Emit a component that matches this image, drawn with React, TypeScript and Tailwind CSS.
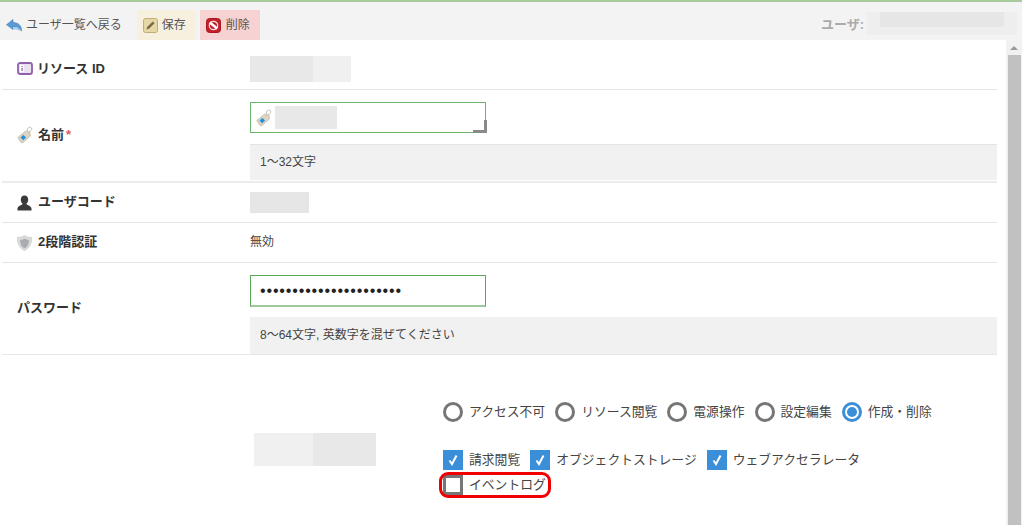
import React from 'react';

function BackIcon() {
  return (
    <svg width="16" height="13" viewBox="0 0 16 13" className="shrink-0">
      <path d="M7 0.5 L0.5 5.8 L7 10.5 V8 H11 L15.5 12 C15.8 7 12.5 3.5 7 3.5 Z" fill="#5b9bd5" stroke="#3f7fb8" strokeWidth="0.6" />
      <path d="M7 8 H11 L15.5 12 L10 10.6 H7 Z" fill="#a9cdea" />
    </svg>
  );
}

function SaveIcon() {
  return (
    <svg width="15" height="15" viewBox="0 0 15 15" className="shrink-0">
      <rect x="0.5" y="0.5" width="14" height="14" rx="2" fill="#e6d7a6" stroke="#bfae78" />
      <path d="M3.5 11.5 L4.2 9 L9.8 3.6 L11.5 5.3 L6 10.8 Z" fill="#7a6a44" />
    </svg>
  );
}

function DeleteIcon() {
  return (
    <svg width="15" height="15" viewBox="0 0 15 15" className="shrink-0">
      <rect x="0.5" y="0.5" width="14" height="14" rx="3" fill="#c4202c" stroke="#a8161f" />
      <circle cx="7.5" cy="7.5" r="4.2" fill="none" stroke="#f6dcdc" strokeWidth="1.2" />
      <path d="M3.8 4.6 L11.2 10.4" stroke="#fff" strokeWidth="2.6" />
    </svg>
  );
}

function ResourceIcon() {
  return (
    <svg width="16" height="13" viewBox="0 0 16 13" className="shrink-0">
      <rect x="1" y="1" width="14" height="11" rx="2" fill="#e9e0f0" stroke="#9160ad" strokeWidth="1.8" />
      <rect x="3" y="3" width="4" height="7" fill="#fff" />
      <rect x="4.5" y="4" width="1.2" height="1.2" fill="#8a5aa6" />
      <rect x="4.5" y="6" width="1.2" height="3" fill="#8a5aa6" />
    </svg>
  );
}

function TagIcon() {
  return (
    <svg width="16" height="18" viewBox="0 0 16 18" className="shrink-0">
      <path d="M10.5 5 C9.5 2 12.5 0.5 14 1.5 C15.5 3 14.2 5 12 5.5" fill="none" stroke="#c4bdb0" strokeWidth="1" />
      <path d="M0.8 11.5 L8.5 5.2 L12.8 6 L13.5 9.8 L6 16.6 Q4.6 17.2 3.8 16.2 Z" fill="#dcd3c2" stroke="#b3aa98" strokeWidth="0.6" />
      <path d="M3.6 11.4 L6.4 9 L9 11.6 L6.2 14.2 Z" fill="#1e90dc" />
    </svg>
  );
}

function UserIcon() {
  return (
    <svg width="15" height="16" viewBox="0 0 15 16" className="shrink-0">
      <path d="M7.5 0.5 C5 0.5 3.8 2.4 3.8 4.8 C3.8 6.6 4.6 8 5.6 8.8 C5.4 10.2 1 10.4 0.5 13.6 V15.5 H14.5 V13.6 C14 10.4 9.6 10.2 9.4 8.8 C10.4 8 11.2 6.6 11.2 4.8 C11.2 2.4 10 0.5 7.5 0.5 Z" fill="#3a3a3a" />
    </svg>
  );
}

function ShieldIcon() {
  return (
    <svg width="15" height="16" viewBox="0 0 15 16" className="shrink-0">
      <path d="M7.5 0.5 C9.5 2 11.5 2.5 14.5 2.5 C14.8 8.5 12.5 13 7.5 15.5 C2.5 13 0.2 8.5 0.5 2.5 C3.5 2.5 5.5 2 7.5 0.5 Z" fill="#dcdcdc" stroke="#bdbdbd" strokeWidth="0.6" />
      <path d="M7.5 3.5 C9 4.5 10.2 4.8 12 4.9 C12 9 10.5 11.8 7.5 13.5 C4.5 11.8 3 9 3 4.9 C4.8 4.8 6 4.5 7.5 3.5 Z" fill="#a9adb1" />
    </svg>
  );
}

function Radio({ label, checked = false }: { label: string; checked?: boolean }) {
  return (
    <label className="flex items-center gap-[6px]">
      {checked ? (
        <span className="flex h-[20px] w-[20px] items-center justify-center rounded-full border-[3px] border-[#3b8fd9] bg-white">
          <span className="h-[10px] w-[10px] rounded-full bg-[#3b8fd9]" />
        </span>
      ) : (
        <span className="h-[20px] w-[20px] rounded-full border-[3px] border-[#767676] bg-white" />
      )}
      <span>{label}</span>
    </label>
  );
}

function Check({ label, checked = false }: { label: string; checked?: boolean }) {
  return (
    <label className="flex items-center gap-[6px]">
      {checked ? (
        <span className="flex h-[20px] w-[20px] items-center justify-center bg-[#3b8fd9]">
          <svg width="12" height="12" viewBox="0 0 12 12">
            <path d="M2.5 6.5 L5 10 L9.5 1.5" fill="none" stroke="#fff" strokeWidth="2" />
          </svg>
        </span>
      ) : (
        <span className="h-[20px] w-[20px] border-[3px] border-[#767676] bg-white" />
      )}
      <span>{label}</span>
    </label>
  );
}

export default function App() {
  return (
    <div className="flex h-[525px] w-[1022px] flex-col overflow-hidden bg-white font-['Liberation_Sans','Noto_Sans_CJK_JP',sans-serif] text-[13px] text-[#444]">
      <div className="flex h-[40px] shrink-0 items-end border-t-2 border-[#a9cc9f] bg-[#f3f3f3] pl-[6px] pr-[5px] text-[12px] text-[#555]">
        <a className="mr-[15px] flex h-[30px] items-center gap-[4px]">
          <BackIcon />
          <span>ユーザ一覧へ戻る</span>
        </a>
        <button className="flex h-[30px] w-[59px] items-center gap-[4px] bg-[#f8f0df] pl-[6px]">
          <SaveIcon />
          <span>保存</span>
        </button>
        <button className="ml-[4px] flex h-[30px] w-[60px] items-center gap-[5px] bg-[#f7d2d3] pl-[6px]">
          <DeleteIcon />
          <span>削除</span>
        </button>
        <div className="ml-auto flex items-center gap-[3px] self-start pt-[10px]">
          <span className="pt-[2px] text-[13px] font-bold text-[#aaa]">ユーザ:</span>
          <div className="h-[23px] w-[150px] bg-[#eeeeee] px-[13px]">
            <div className="h-[15px] w-full bg-[#e6e6e6]" />
          </div>
        </div>
      </div>

      <div className="flex min-h-0 flex-1">
        <div className="min-w-0 flex-1 pl-[2px] pr-[9px]">
          <div className="flex h-[50px] items-center border-b border-[#e4e4e4] pt-[8px]">
            <div className="flex w-[248px] items-center gap-[4px] pl-[15px] font-bold text-[#333]">
              <ResourceIcon />
              <span>リソース ID</span>
            </div>
            <div className="flex h-[26px] w-[101px]">
              <div className="w-[63px] bg-[#e8e8e8]" />
              <div className="flex-1 bg-[#f0f0f0]" />
            </div>
          </div>

          <div className="flex h-[93px] items-start border-b-2 border-[#ececec]">
            <div className="flex h-full w-[248px] items-center gap-[5px] pb-[2px] pl-[15px] font-bold text-[#333]">
              <TagIcon />
              <span>名前</span>
              <span className="-ml-[3px] text-[#e05a5a]">*</span>
            </div>
            <div className="flex-1 pt-[12px]">
              <div className="relative flex h-[31px] w-[236px] items-center gap-[3px] border border-[#6db36d] pl-[5px]">
                <TagIcon />
                <div className="h-[23px] w-[62px] bg-[#e8e8e8]" />
                <span className="absolute -bottom-[1px] -right-[2px] h-[13px] w-[14px] border-b-[3px] border-r-[3px] border-[#8a8a8a]" />
              </div>
              <div className="mt-[11px] flex h-[36px] items-center border-t border-[#e4e4e4] bg-[#f1f1f1] pb-[2px] pl-[10px] text-[12px]">
                1〜32文字
              </div>
            </div>
          </div>

          <div className="flex h-[40px] items-center border-b border-[#e4e4e4]">
            <div className="flex w-[248px] items-center gap-[6px] pl-[15px] font-bold text-[#333]">
              <UserIcon />
              <span className="-mt-[2px]">ユーザコード</span>
            </div>
            <div className="h-[21px] w-[59px] bg-[#e6e6e6]" />
          </div>

          <div className="flex h-[40px] items-center border-b border-[#e4e4e4]">
            <div className="flex w-[248px] items-center gap-[6px] pl-[15px] font-bold text-[#333]">
              <ShieldIcon />
              <span className="-mt-[2px]">2段階認証</span>
            </div>
            <span className="-mt-[2px] text-[12px]">無効</span>
          </div>

          <div className="flex h-[92px] items-start border-b border-[#e8e8e8]">
            <div className="flex h-full w-[248px] items-center pb-[2px] pl-[15px] font-bold text-[#333]">
              パスワード
            </div>
            <div className="flex-1 pt-[12px]">
              <div className="flex h-[32px] w-[236px] items-center border border-b-2 border-[#5aa85a] border-b-[#9ccb9c] pl-[9px] text-[16px] tracking-[0.85px] text-[#222]">
                ••••••••••••••••••••••
              </div>
              <div className="mt-[10px] flex h-[37px] items-center bg-[#f1f1f1] pb-[2px] pl-[10px] text-[12px]">
                8〜64文字, 英数字を混ぜてください
              </div>
            </div>
          </div>

          <div className="flex items-start pl-[252px]">
            <div className="mt-[78px] flex h-[33px] w-[122px]">
              <div className="w-[59px] bg-[#f0f0f0]" />
              <div className="flex-1 bg-[#e8e8e8]" />
            </div>
            <div className="ml-[67px] pt-[47px] text-[12.8px]">
              <div className="flex gap-[10px]">
                <Radio label="アクセス不可" />
                <Radio label="リソース閲覧" />
                <Radio label="電源操作" />
                <Radio label="設定編集" />
                <Radio label="作成・削除" checked />
              </div>
              <div className="mt-[28px] flex gap-[10px]">
                <Check label="請求閲覧" checked />
                <Check label="オブジェクトストレージ" checked />
                <Check label="ウェブアクセラレータ" checked />
              </div>
              <div className="relative mt-[5px] flex">
                <Check label="イベントログ" />
                <span className="absolute -left-[4px] -top-[3px] h-[26px] w-[112px] rounded-[9px] border-[3px] border-[#f00000]" />
              </div>
            </div>
          </div>
        </div>

        <div className="flex w-[16px] shrink-0 flex-col items-center bg-[#f1f1f1] pt-[6px]">
          <span className="h-0 w-0 border-x-[4px] border-b-[4px] border-x-transparent border-b-[#9a9a9a]" />
          <div className="mt-[5px] w-[13px] flex-1 bg-[#c1c1c1]" />
        </div>
      </div>
    </div>
  );
}
